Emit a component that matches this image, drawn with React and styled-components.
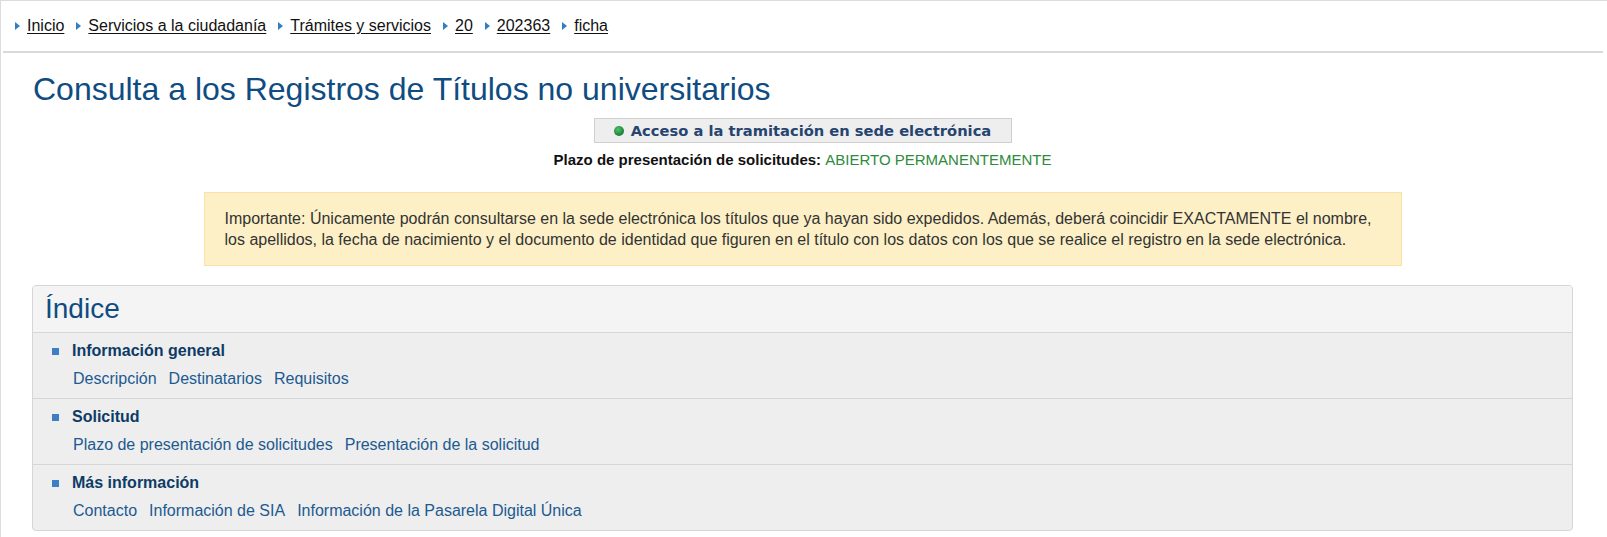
import React from 'react';
import styled, { createGlobalStyle } from 'styled-components';

const GlobalStyle = createGlobalStyle`
    html, body { margin: 0; padding: 0; background: #fff; }
    body { font-family: "Liberation Sans", Arial, sans-serif; color: #333; }
    a { cursor: pointer; }
`

const crumbs = ['Inicio', 'Servicios a la ciudadanía', 'Trámites y servicios', '20', '202363', 'ficha']

const sections = [
    { title: 'Información general', links: ['Descripción', 'Destinatarios', 'Requisitos'] },
    { title: 'Solicitud', links: ['Plazo de presentación de solicitudes', 'Presentación de la solicitud'] },
    { title: 'Más información', links: ['Contacto', 'Información de SIA', 'Información de la Pasarela Digital Única'] },
]

function App() {
  return (
    <Page>
        <GlobalStyle />
        <Crumbs>
            {crumbs.map((c) => (
                <Crumb key={c}>
                    <Arrow />
                    <a>{c}</a>
                </Crumb>
            ))}
        </Crumbs>

        <Main>
            <Title>Consulta a los Registros de Títulos no universitarios</Title>

            <SedeButton>
                <Dot />
                Acceso a la tramitación en sede electrónica
            </SedeButton>

            <Plazo>
                Plazo de presentación de solicitudes: <span>ABIERTO PERMANENTEMENTE</span>
            </Plazo>

            <Alert>
                Importante: Únicamente podrán consultarse en la sede electrónica los títulos que ya hayan sido expedidos. Además, deberá coincidir EXACTAMENTE el nombre, los apellidos, la fecha de nacimiento y el documento de identidad que figuren en el título con los datos con los que se realice el registro en la sede electrónica.
            </Alert>

            <Index>
                <IndexHead>Índice</IndexHead>
                {sections.map((s, i) => (
                    <Section key={s.title} last={i === sections.length - 1}>
                        <SectionTitle><Square />{s.title}</SectionTitle>
                        <Links>
                            {s.links.map((l) => <a key={l}>{l}</a>)}
                        </Links>
                    </Section>
                ))}
            </Index>
        </Main>
    </Page>
  )
}

const Page = styled.div`
    min-height: 100vh;
    border-top: 1px solid #dcdcdc;
    border-left: 1px solid #dcdcdc;
    box-sizing: border-box;
`

const Crumbs = styled.nav`
    display: flex;
    align-items: center;
    height: 50px;
    margin: 0 4px 0 2px;
    padding-left: 12px;
    border-bottom: 2px solid #d9d9d9;
`

const Crumb = styled.div`
    display: flex;
    align-items: center;
    margin-right: 12px;
    font-size: 16px;

    a { color: #111; text-decoration: underline; text-underline-offset: 2px; }
`

const Arrow = styled.span`
    width: 0;
    height: 0;
    margin-right: 7px;
    border-left: 5px solid #2f7fc2;
    border-top: 4px solid transparent;
    border-bottom: 4px solid transparent;
`

const Main = styled.main`
    padding: 0 34px 10px 31px;
`

const Title = styled.h1`
    margin: 18px 0 11px 1px;
    font-size: 32px;
    line-height: 36px;
    font-weight: normal;
    color: #0f4c81;
`

const SedeButton = styled.a`
    display: flex;
    align-items: center;
    justify-content: center;
    gap: 7px;
    width: 418px;
    height: 25px;
    margin: 0 auto;
    box-sizing: border-box;
    background: #eeeeee;
    border: 1px solid #cfcfcf;
    color: #26446f;
    font-family: "DejaVu Sans", Verdana, sans-serif;
    font-weight: bold;
    font-size: 14.7px;
`

const Dot = styled.span`
    width: 10px;
    height: 10px;
    border-radius: 50%;
    background: radial-gradient(circle at 40% 35%, #4fc46c, #1a7f35 70%);
`

const Plazo = styled.p`
    margin: 8px 0 0;
    text-align: center;
    font-size: 15px;
    line-height: 18px;
    font-weight: bold;
    color: #111;

    span { color: #2e8b3c; font-weight: normal; }
`

const Alert = styled.div`
    width: 1198px;
    box-sizing: border-box;
    margin: 23px auto 19px;
    padding: 15px 18px 15px 20px;
    background: #fdf0c6;
    border: 1px solid #f9e2a4;
    font-size: 16px;
    line-height: 21px;
    color: #333;
`

const Index = styled.section`
    background: #eeeeee;
    border: 1px solid #d6d6d6;
    border-radius: 4px;
    overflow: hidden;
`

const IndexHead = styled.h2`
    margin: 0;
    height: 46px;
    display: flex;
    align-items: center;
    padding-left: 12px;
    background: #f4f4f4;
    border-bottom: 1px solid #d6d6d6;
    font-size: 28px;
    font-weight: normal;
    color: #0f4c81;
`

const Section = styled.div`
    padding: 8px 0 9px 19px;
    border-bottom: ${(p) => (p.last ? 'none' : '1px solid #d6d6d6')};
`

const SectionTitle = styled.h3`
    display: flex;
    align-items: center;
    margin: 0;
    font-size: 16px;
    line-height: 20px;
    font-weight: bold;
    color: #0d3b66;
`

const Square = styled.span`
    width: 7px;
    height: 7px;
    margin-right: 13px;
    background: #3d7ec5;
`

const Links = styled.div`
    display: flex;
    gap: 12px;
    margin-top: 8px;
    padding-left: 21px;
    font-size: 16px;
    line-height: 20px;

    a { color: #1c5a91; }
`

export default App
